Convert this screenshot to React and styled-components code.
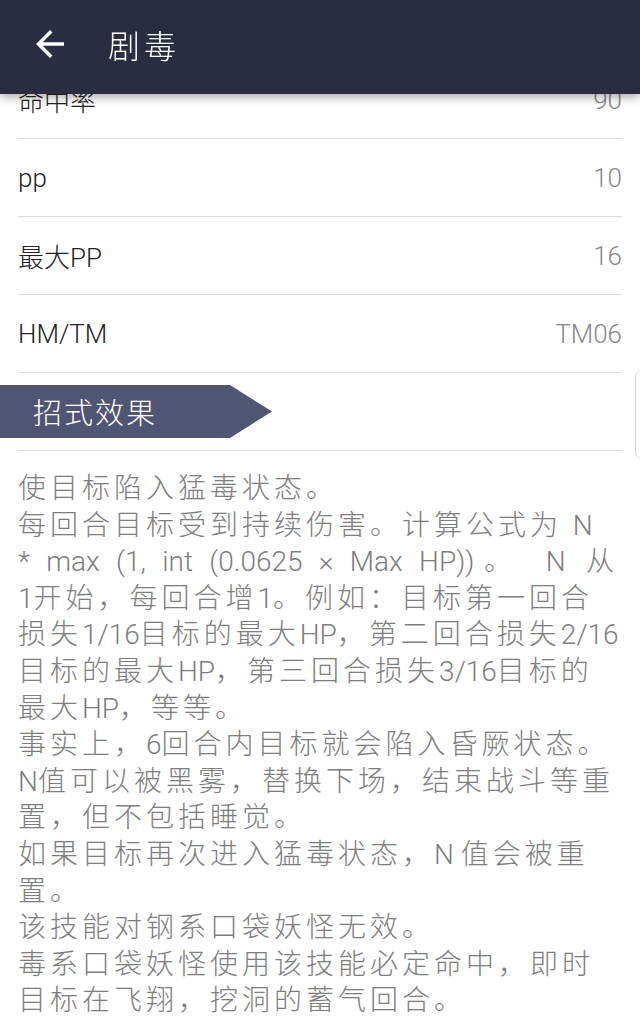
import React from "react";
import styled, { createGlobalStyle } from "styled-components";

const Global = createGlobalStyle`
  html, body { margin: 0; padding: 0; background: #ffffff; }
  body {
    font-family: "Roboto", "Noto Sans CJK SC", sans-serif;
    font-weight: 300;
    overflow: hidden;
  }
  * { box-sizing: border-box; }
`;

const Header = styled.header`
  position: fixed;
  top: 0;
  left: 0;
  right: 0;
  height: 94px;
  background: #2a2c42;
  display: flex;
  align-items: center;
  padding: 0 0 6px 29px;
  gap: 37px;
  box-shadow: 0 3px 10px rgba(0, 0, 0, 0.35);
  z-index: 10;
`;

const BackIcon = styled.svg`
  width: 42px;
  height: 42px;
  flex: none;
  fill: #ffffff;
`;

const Title = styled.h1`
  margin: 0;
  font-family: "Noto Sans CJK SC", sans-serif;
  font-weight: 300;
  font-size: 32px;
  letter-spacing: 4px;
  color: #ffffff;
`;

const Content = styled.main`
  padding-top: 61px;
`;

const Row = styled.div`
  margin: 0 18px;
  height: 78px;
  border-bottom: 1px solid #dcdcdc;
  display: flex;
  align-items: center;
  justify-content: space-between;
  font-size: 26px;
`;

const Label = styled.span`
  color: #222222;
`;

const Value = styled.span`
  color: #8a8a8a;
`;

const Section = styled.div`
  margin: 0 18px;
  padding: 12px 0 12px;
  border-bottom: 1px solid #dcdcdc;
`;

const Banner = styled.div`
  margin-left: -18px;
  width: 272px;
  height: 53px;
  background: #4f5573;
  clip-path: polygon(0 0, 230px 0, 272px 50%, 230px 100%, 0 100%);
  color: #ffffff;
  font-family: "Noto Sans CJK SC", sans-serif;
  font-weight: 300;
  font-size: 29px;
  letter-spacing: 2px;
  line-height: 53px;
  padding-left: 33px;
`;

const Description = styled.div`
  padding: 20px 18px 0;
  color: #7e7e7e;
  font-size: 28px;
  line-height: 36.6px;
  letter-spacing: 4px;
`;

const Line = styled.div`
  text-align: ${(p) => (p.$spread ? "justify" : "left")};
  text-align-last: ${(p) => (p.$spread ? "justify" : "auto")};
  text-justify: inter-word;
  width: ${(p) => (p.$spread ? "600px" : "auto")};
  white-space: ${(p) => (p.$spread ? "normal" : "nowrap")};
`;

const Lat = styled.span`
  letter-spacing: 0;
`;

const ScrollHandle = styled.div`
  position: fixed;
  right: -10px;
  top: 370px;
  width: 15px;
  height: 89px;
  border: 1px solid #d6d6d6;
  border-radius: 7px;
  background: #ffffff;
`;

const rows = [
  ["命中率", "90"],
  ["pp", "10"],
  ["最大PP", "16"],
  ["HM/TM", "TM06"],
];

export default function App() {
  return (
    <>
      <Global />
      <Header>
        <BackIcon viewBox="0 0 24 24">
          <path d="M20 11H7.83l5.59-5.59L12 4l-8 8 8 8 1.41-1.41L7.83 13H20v-2z" />
        </BackIcon>
        <Title>剧毒</Title>
      </Header>
      <Content>
        {rows.map(([k, v]) => (
          <Row key={k}>
            <Label>{k}</Label>
            <Value>{v}</Value>
          </Row>
        ))}
        <Section>
          <Banner>招式效果</Banner>
        </Section>
        <Description>
          <Line>使目标陷入猛毒状态。</Line>
          <Line>
            每回合目标受到持续伤害。计算公式为 <Lat>N</Lat>
          </Line>
          <Line $spread>
            <Lat>* max (1, int (0.0625 × Max HP))</Lat>。 <Lat>N</Lat> 从
          </Line>
          <Line>
            <Lat>1</Lat>开始，每回合增<Lat>1</Lat>。例如：目标第一回合
          </Line>
          <Line>
            损失<Lat>1/16</Lat>目标的最大<Lat>HP</Lat>，第二回合损失<Lat>2/16</Lat>
          </Line>
          <Line>
            目标的最大<Lat>HP</Lat>，第三回合损失<Lat>3/16</Lat>目标的
          </Line>
          <Line>
            最大<Lat>HP</Lat>，等等。
          </Line>
          <Line>
            事实上，<Lat>6</Lat>回合内目标就会陷入昏厥状态。
          </Line>
          <Line>
            <Lat>N</Lat>值可以被黑雾，替换下场，结束战斗等重
          </Line>
          <Line>置，但不包括睡觉。</Line>
          <Line>
            如果目标再次进入猛毒状态，<Lat>N </Lat>值会被重
          </Line>
          <Line>置。</Line>
          <Line>该技能对钢系口袋妖怪无效。</Line>
          <Line>毒系口袋妖怪使用该技能必定命中，即时</Line>
          <Line>目标在飞翔，挖洞的蓄气回合。</Line>
        </Description>
      </Content>
      <ScrollHandle />
    </>
  );
}
